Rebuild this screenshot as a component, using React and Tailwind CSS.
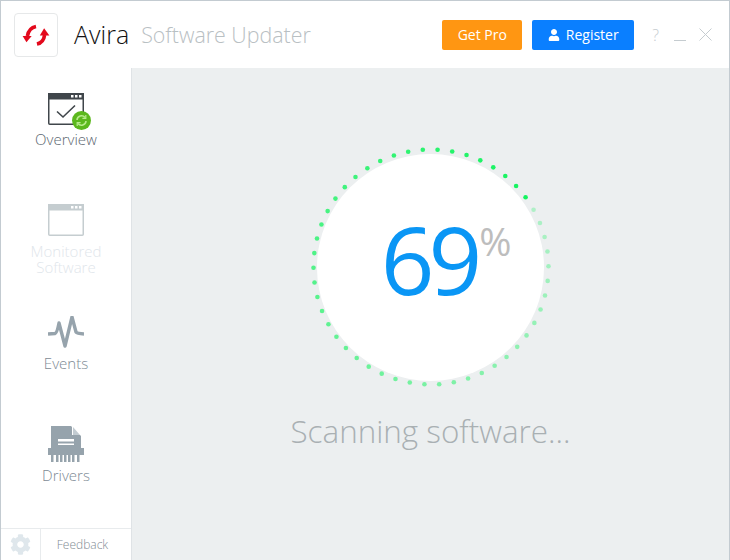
import { FaCog, FaUser } from "react-icons/fa";

const DOTS = Array.from({ length: 50 }, (_, i) => {
  const angle = ((3.2 + i * 7.2) * Math.PI) / 180;
  // brightest dot sits at index 7, fades going counter-clockwise
  const steps = (7 - i + 50) % 50;
  return {
    cx: 120 + 117.5 * Math.sin(angle),
    cy: 120 - 117.5 * Math.cos(angle),
    opacity: 1 - (0.72 * steps) / 49,
  };
});

function Logo() {
  return (
    <svg width="44" height="44" viewBox="0 0 44 44">
      <path d="M22 13 Q14.5 14.5 13 23" fill="none" stroke="#e3091c" strokeWidth="3.8" />
      <polygon points="8,23 17.5,23 12,29.5" fill="#e3091c" />
      <path d="M23 31.5 Q30 30 31 22" fill="none" stroke="#e3091c" strokeWidth="3.8" />
      <polygon points="26,22.5 36,22.5 30.5,15" fill="#e3091c" />
    </svg>
  );
}

function WindowIcon({ color, check }) {
  return (
    <svg width="36" height="32" viewBox="0 0 36 32">
      <rect x="0.75" y="0.75" width="34.5" height="30.5" rx="1" fill="#fff" stroke={color} strokeWidth="1.5" />
      <rect x="0" y="0" width="36" height="6.5" fill={color} />
      <rect x="23" y="2" width="2.5" height="2.5" fill="#fff" />
      <rect x="27" y="2" width="2.5" height="2.5" fill="#fff" />
      <rect x="31" y="2" width="2.5" height="2.5" fill="#fff" />
      {check && <path d="M9 18.5 L15 24 L27 12.5" fill="none" stroke={color} strokeWidth="1.6" />}
    </svg>
  );
}

function PulseIcon() {
  return (
    <svg width="36" height="32" viewBox="0 0 36 32">
      <path
        d="M0 18 L7 17.5 Q9 17 11 7 L17 30 L24 1 L28 16 Q29 17.5 36 18"
        fill="none"
        stroke="#96a3ac"
        strokeWidth="3.4"
        strokeLinejoin="round"
      />
    </svg>
  );
}

function ShredderIcon() {
  return (
    <svg width="36" height="36" viewBox="0 0 36 36">
      <path d="M3 0 H23 L33 10 V22 H3 Z" fill="#96a3ac" />
      <path d="M24 0 L33 9 H24 Z" fill="#fff" />
      <path d="M25 1 L32 9 H25 Z" fill="#c3ccd2" />
      <rect x="10" y="13" width="16" height="2.5" fill="#fff" />
      <rect x="10" y="17.5" width="16" height="1.5" fill="#fff" />
      <rect x="0" y="22" width="36" height="7" fill="#96a3ac" />
      {[3, 8, 12, 16, 20, 24, 29].map((x) => (
        <rect key={x} x={x} y="29" width="2.5" height="7" fill="#96a3ac" />
      ))}
    </svg>
  );
}

function NavItem({ icon, height, labelClass, children }) {
  return (
    <div className="flex flex-col items-center" style={{ height }}>
      {icon}
      <div className={`text-center text-[15px] leading-[16px] font-light ${labelClass}`}>{children}</div>
    </div>
  );
}

export default function App() {
  return (
    <div className="w-[730px] h-[560px] flex flex-col border-x border-t border-[#c3cbd1] bg-white font-['Open_Sans',sans-serif] overflow-hidden">
      {/* Header */}
      <div className="h-[67px] shrink-0 flex items-center pl-[13px] pr-[17px]">
        <div className="w-[44px] h-[44px] border border-[#e6e8e9] rounded-[4px] flex items-center justify-center">
          <Logo />
        </div>
        <span className="ml-[16px] text-[25px] leading-none font-light text-[#111]">Avira</span>
        <span className="ml-[12px] text-[21.4px] leading-none font-light text-[#b9c0c3]">Software Updater</span>

        <div className="ml-auto flex items-center">
          <button className="w-[80px] h-[30px] rounded-[2px] bg-[#ff9612] text-white text-[14px] font-normal">Get Pro</button>
          <button className="ml-[10px] w-[102px] h-[30px] rounded-[2px] bg-[#0a7fff] text-white text-[14px] flex items-center justify-center gap-[6px]">
            <FaUser className="text-[12px]" />
            Register
          </button>
          <span className="ml-[18px] text-[16px] font-light text-[#c5ccd0]">?</span>
          <span className="ml-[15px] w-[12px] h-px bg-[#c5ccd0] mt-[12px]"></span>
          <svg className="ml-[13px]" width="13" height="13" viewBox="0 0 13 13">
            <path d="M0.5 0.5 L12.5 12.5 M12.5 0.5 L0.5 12.5" stroke="#c5ccd0" strokeWidth="1" />
          </svg>
        </div>
      </div>

      <div className="flex flex-1 min-h-0">
        {/* Sidebar */}
        <div className="w-[131px] shrink-0 border-r border-[#dfe3e6] flex flex-col">
          <div className="flex-1 pt-[25px]">
            <NavItem
              height={111}
              labelClass="mt-[6px] text-[#5c6770]"
              icon={
                <div className="relative w-[36px] h-[32px]">
                  <WindowIcon color="#40464b" check />
                  <div className="absolute left-[24px] top-[18px] w-[19px] h-[19px] rounded-full bg-[#5cb81e] flex items-center justify-center">
                    <svg width="13" height="13" viewBox="0 0 13 13" fill="none" stroke="#b9ec8d" strokeWidth="1.6">
                      <path d="M2 6 A4.5 4.5 0 0 1 10 3.5" />
                      <path d="M11 7 A4.5 4.5 0 0 1 3 9.5" />
                      <path d="M10.8 1 V4.4 H7.4" strokeWidth="1.2" />
                      <path d="M2.2 12 V8.6 H5.6" strokeWidth="1.2" />
                    </svg>
                  </div>
                </div>
              }
            >
              Overview
            </NavItem>
            <NavItem height={112} labelClass="mt-[7px] text-[#dfe6eb]" icon={<WindowIcon color="#c5cdd0" />}>
              Monitored
              <br />
              Software
            </NavItem>
            <NavItem height={110} labelClass="mt-[7px] text-[#7d8a94]" icon={<PulseIcon />}>
              Events
            </NavItem>
            <NavItem height={90} labelClass="mt-[5px] text-[#7d8a94]" icon={<ShredderIcon />}>
              Drivers
            </NavItem>
          </div>
          <div className="h-[32px] shrink-0 border-t border-[#e8ebed] flex items-center">
            <div className="w-[40px] h-full border-r border-[#e8ebed] flex items-center justify-center">
              <FaCog className="text-[21px] text-[#dfe7ec]" />
            </div>
            <div className="flex-1 text-center text-[12px] font-light text-[#828c94] pr-[7px]">Feedback</div>
          </div>
        </div>

        {/* Scan progress */}
        <div className="flex-1 bg-[#eceff0] flex flex-col items-center pt-[79px]">
          <div className="relative w-[240px] h-[240px] flex items-center justify-center">
            <svg className="absolute inset-0" width="240" height="240" viewBox="0 0 240 240">
              {DOTS.map((d, i) => (
                <circle key={i} cx={d.cx} cy={d.cy} r="2.3" fill="#12f45e" opacity={d.opacity} />
              ))}
            </svg>
            <div className="w-[227px] h-[227px] rounded-full bg-white flex items-start justify-center pt-[47px] pr-[4px]">
              <div className="relative">
                <span className="block text-[94px] leading-[116px] font-normal text-[#0a96f5] tracking-[-6px]">69</span>
                <span className="absolute left-full top-[19px] ml-[3px] text-[39px] leading-[42px] font-normal text-[#bdbdbd]">%</span>
              </div>
            </div>
          </div>
          <div className="mt-[22px] text-[31.4px] leading-[44px] font-light text-[#a9b0b3]">Scanning software...</div>
        </div>
      </div>
    </div>
  );
}
